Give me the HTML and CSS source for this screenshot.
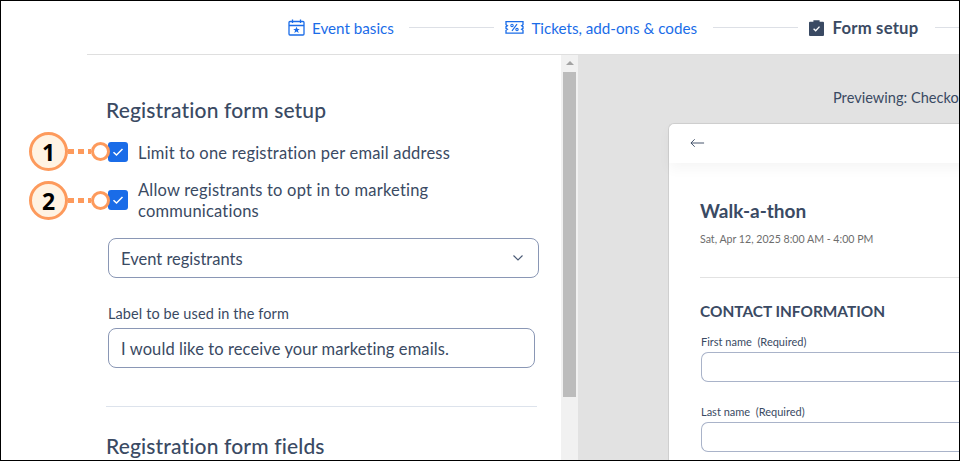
FILE: index.html
```html
<!DOCTYPE html>
<html lang="en">
<head>
<meta charset="utf-8">
<title>Form setup</title>
<link rel="stylesheet" href="styles.css">
</head>
<body>
<div class="frame">
  <header class="stepper">
    <div class="step link">
      <svg class="step-icon" viewBox="0 0 17 17" width="17" height="17" fill="none" stroke="#1a6ce8" stroke-width="1.3"><rect x="1" y="2.5" width="15" height="13.5" rx="1"/><path d="M1 6.5h15M4.5 0.5v3.5M12.5 0.5v3.5"/><path d="M8.5 7.8l1 2.2h2.3l-1.9 1.5.8 2.4-2.2-1.4-2.2 1.4.8-2.4L5.2 10h2.3z" fill="#1a6ce8" stroke="none"/></svg>
      <span>Event basics</span>
    </div>
    <span class="rule"></span>
    <div class="step link">
      <svg class="step-icon" viewBox="0 0 19 13" width="19" height="13" fill="none" stroke="#1a6ce8" stroke-width="1.3"><path d="M1 .7h17v3l-1.4 1 1.4 1v1.6l-1.4 1 1.4 1v2.9H1V9.3l1.4-1-1.4-1V5.7l1.4-1-1.4-1z"/><path d="M7 9.8l5-6.6" stroke-width="1.2"/><circle cx="7" cy="4.4" r="1.2" stroke-width="1.1"/><circle cx="12" cy="8.6" r="1.2" stroke-width="1.1"/></svg>
      <span>Tickets, add-ons &amp; codes</span>
    </div>
    <span class="rule"></span>
    <div class="step current">
      <svg class="step-icon" viewBox="0 0 15 16" width="15" height="16"><path d="M1 1.8h3.4V.2h6.2v1.6H14a1 1 0 0 1 1 1V15a1 1 0 0 1-1 1H1a1 1 0 0 1-1-1V2.8a1 1 0 0 1 1-1z" fill="#3a4a63"/><path d="M4.6 8.7l2.1 2.1 3.8-4.2" fill="none" stroke="#fff" stroke-width="1.3"/></svg>
      <span>Form setup</span>
    </div>
    <span class="rule short"></span>
  </header>
  <main class="workspace">
    <section class="panel">
      <h2 class="heading">Registration form setup</h2>
      <div class="check-row first">
        <span class="box"><svg viewBox="0 0 12 12" width="12" height="12" fill="none" stroke="#fff" stroke-width="1.5"><path d="M1.5 6.2l3 2.8L10.5 3"/></svg></span>
        <span class="check-label">Limit to one registration per email address</span>
      </div>
      <div class="check-row second">
        <span class="box"><svg viewBox="0 0 12 12" width="12" height="12" fill="none" stroke="#fff" stroke-width="1.5"><path d="M1.5 6.2l3 2.8L10.5 3"/></svg></span>
        <span class="check-label">Allow registrants to opt in to marketing communications</span>
      </div>
      <div class="select">
        <span class="select-value">Event registrants</span>
        <svg viewBox="0 0 12 8" width="12" height="8" fill="none" stroke="#4a5a75" stroke-width="1.1"><path d="M1.5 1.5L6 6l4.5-4.5"/></svg>
      </div>
      <div class="field-label">Label to be used in the form</div>
      <div class="text-input">I would like to receive your marketing emails.</div>
      <hr class="divider">
      <h2 class="heading lower">Registration form fields</h2>
    </section>
    <div class="scrollbar">
      <div class="arrow"></div>
      <div class="thumb"></div>
    </div>
    <section class="preview">
      <div class="preview-title">Previewing: Checkout page</div>
      <div class="card">
        <div class="card-top">
          <svg viewBox="0 0 16 10" width="15" height="10" fill="none" stroke="#3a4a63" stroke-width="1"><path d="M15 5H1M5 1L1 5l4 4"/></svg>
        </div>
        <div class="card-body">
          <h3 class="event-name">Walk-a-thon</h3>
          <div class="event-date">Sat, Apr 12, 2025 8:00 AM - 4:00 PM</div>
          <hr class="card-rule">
          <h4 class="contact">CONTACT INFORMATION</h4>
          <div class="small-label">First name&nbsp; (Required)</div>
          <div class="small-input"></div>
          <div class="small-label next">Last name&nbsp; (Required)</div>
          <div class="small-input"></div>
        </div>
      </div>
    </section>
  </main>
  <div class="callout one"><span class="badge">1</span><span class="dots"></span><span class="ring"></span></div>
  <div class="callout two"><span class="badge">2</span><span class="dots"></span><span class="ring"></span></div>
</div>
</body>
</html>
```
FILE: styles.css
```css
* { box-sizing: border-box; }
html, body { margin: 0; padding: 0; }
body { width: 960px; height: 461px; overflow: hidden; background: #fff; font-family: Lato, "Open Sans", sans-serif; color: #3a4a63; }
.frame { position: relative; width: 960px; height: 461px; border: 1px solid #000; overflow: hidden; display: flex; flex-direction: column; }
.stepper { height: 54px; margin-left: 86px; flex: none; display: flex; align-items: center; padding-left: 201px; border-bottom: 1px solid #dfdfdf; white-space: nowrap; font-size: 15.2px; }
.step { display: flex; align-items: center; gap: 7px; flex: none; }
.link { color: #1a6ce8; }
.current { font-weight: 700; font-size: 16.7px; letter-spacing: .2px; gap: 9px; color: #3a4a63; }
.rule { width: 85px; height: 1px; background: #dde0e6; margin: 0 11px 0 15.5px; flex: none; }
.rule.short { margin: 0 0 0 17px; width: 40px; }
.workspace { flex: 1; display: flex; min-height: 0; }
.panel { width: 560px; flex: none; padding: 43px 22px 0 107px; }
.heading { margin: 0 0 0 -2px; font-size: 21px; letter-spacing: .15px; line-height: 24px; font-weight: 500; color: #3a4a63; white-space: nowrap; }
.check-row { display: flex; gap: 10px; width: 400px; font-size: 16.5px; letter-spacing: .2px; line-height: 21px; align-items: center; }
.check-row.first { margin-top: 20px; height: 20px; }
.check-row.second { margin-top: 16px; width: 380px; }
.check-label { padding-top: 2px; }
.box { width: 20px; height: 20px; border-radius: 3px; background: #1a6ce8; display: flex; align-items: center; justify-content: center; flex: none; }
.select { margin-top: 16px; width: 431px; height: 40px; border: 1px solid #8a97b5; border-radius: 8px; display: flex; align-items: center; justify-content: space-between; padding: 0 14px 0 12px; font-size: 16.5px; }
.select-value { padding-top: 2px; }
.field-label { margin-top: 27px; font-size: 14.5px; letter-spacing: .1px; line-height: 18px; }
.text-input { margin-top: 5px; width: 427px; height: 40px; border: 1px solid #8a97b5; border-radius: 8px; display: flex; align-items: center; padding: 2px 12px 0; font-size: 16.5px; letter-spacing: .1px; }
.divider { margin: 38px 0 0 -2px; width: 431px; border: 0; border-top: 1px solid #dde3ec; }
.heading.lower { margin-top: 27px; }
.scrollbar { width: 17px; flex: none; background: #f1f1f1; display: flex; flex-direction: column; align-items: center; }
.arrow { margin-top: 6px; width: 0; height: 0; border-left: 4px solid transparent; border-right: 4px solid transparent; border-bottom: 4px solid #a3a3a3; }
.thumb { margin-top: 7px; width: 13px; height: 325px; background: #bcbcbc; }
.preview { flex: 1; background: #e2e2e2; min-width: 0; padding: 34px 0 0 90px; overflow: hidden; }
.preview-title { margin-left: 165px; font-size: 14.6px; line-height: 18px; white-space: nowrap; }
.card { margin-top: 16px; width: 400px; height: 400px; background: #fff; border-radius: 6px 0 0 0; border: 1px solid #cfcfcf; border-right: 0; }
.card-top { height: 39px; padding: 14px 0 0 21px; box-shadow: 0 6px 12px rgba(0,0,0,.04); display: flex; align-items: flex-start; }
.card-body { padding: 36px 0 0 31px; }
.event-name { margin: 0; font-size: 19px; line-height: 24px; font-weight: 700; }
.event-date { margin-top: 9px; font-size: 10.6px; line-height: 14px; color: #6d6d6d; }
.card-rule { margin: 31px 0 0; border: 0; border-top: 1px solid #e2e2e2; }
.contact { margin: 24px 0 0; font-size: 15.4px; line-height: 18px; font-weight: 700; white-space: nowrap; }
.small-label { margin: 15px 0 0 1px; font-size: 11px; line-height: 14px; }
.small-label.next { margin-top: 23px; }
.small-input { margin: 3px 0 0 1px; height: 30px; border: 1px solid #a9b3c9; border-radius: 7px 0 0 7px; border-right: 0; }
.callout { position: absolute; left: 28px; display: flex; align-items: center; }
.callout.one { top: 131px; }
.callout.two { top: 180px; }
.badge { width: 39px; height: 39px; border-radius: 50%; background: #fff3e3; border: 3px solid #fd9a5c; display: flex; align-items: center; justify-content: center; font-family: "Open Sans", sans-serif; font-weight: 700; font-size: 23px; color: #000; flex: none; }
.dots { width: 23px; height: 5px; flex: none; background: repeating-linear-gradient(90deg, #fd9a5c 0 5.5px, transparent 5.5px 10px); }
.ring { width: 19px; height: 19px; border-radius: 50%; background: #fff; border: 3px solid #fd9a5c; flex: none; }
```
